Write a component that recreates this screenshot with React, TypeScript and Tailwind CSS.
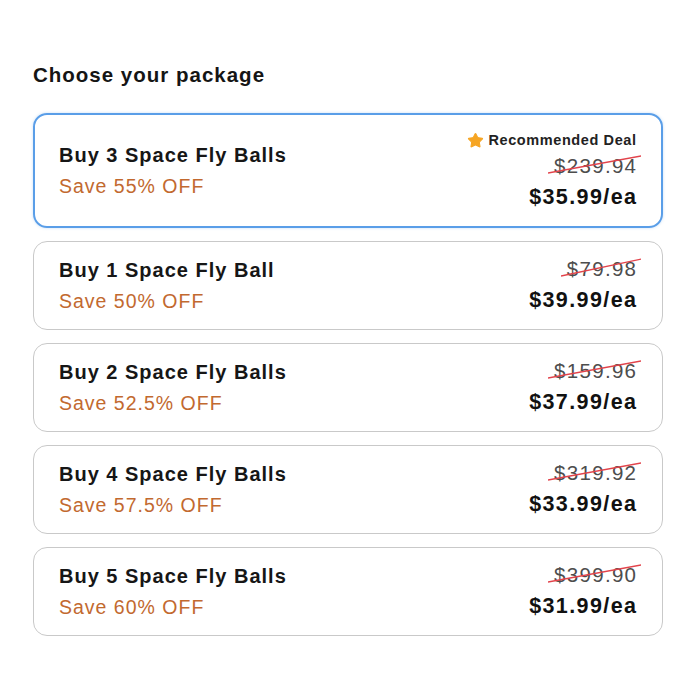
import React from 'react';
import { Star } from 'lucide-react';

const packages = [
  { id: 3, title: 'Buy 3 Space Fly Balls', save: 'Save 55% OFF', was: '$239.94', now: '$35.99/ea', recommended: true },
  { id: 1, title: 'Buy 1 Space Fly Ball', save: 'Save 50% OFF', was: '$79.98', now: '$39.99/ea' },
  { id: 2, title: 'Buy 2 Space Fly Balls', save: 'Save 52.5% OFF', was: '$159.96', now: '$37.99/ea' },
  { id: 4, title: 'Buy 4 Space Fly Balls', save: 'Save 57.5% OFF', was: '$319.92', now: '$33.99/ea' },
  { id: 5, title: 'Buy 5 Space Fly Balls', save: 'Save 60% OFF', was: '$399.90', now: '$31.99/ea' },
];

const OldPrice: React.FC<{ value: string }> = ({ value }) => (
  <span className="relative inline-block text-[20.5px] leading-[26px] text-[#4d4d4d] tracking-[1.3px] -mr-[1.3px]">
    {value}
    {/* hand-drawn style red strike */}
    <svg
      className="absolute -left-[6px] top-0 h-[22px] w-[calc(100%+10px)] pointer-events-none"
      viewBox="0 0 100 22"
      preserveAspectRatio="none"
    >
      <line x1="0" y1="20" x2="100" y2="3" stroke="#e2434b" strokeWidth="1.4" vectorEffect="non-scaling-stroke" />
    </svg>
  </span>
);

export default function App() {
  return (
    <div className="w-[700px] h-[700px] bg-white pl-[33px] pt-[62px] font-['Liberation_Sans',Arial,sans-serif]">
      <h2 className="text-[20.5px] leading-[26px] font-bold text-[#151515] tracking-[1px] mb-[25px]">
        Choose your package
      </h2>

      <div className="w-[630px] flex flex-col gap-[13px]">
        {packages.map((p) => (
          <div
            key={p.id}
            className={
              p.recommended
                ? 'flex items-center justify-between h-[115px] rounded-[14px] border-[2.5px] border-[#5a9ee8] pl-[24px] pr-[25px] shadow-[0_0_3px_rgba(90,158,232,0.35)]'
                : 'flex items-center justify-between h-[89px] rounded-[14px] border border-[#c9c9c9] pl-[25px] pr-[26px]'
            }
          >
            <div className="flex flex-col gap-[3px]">
              <span className="text-[20px] leading-[28px] font-bold text-[#161616] tracking-[1px]">
                {p.title}
              </span>
              <span className="text-[19.5px] leading-[28px] text-[#c2692f] tracking-[1px]">
                {p.save}
              </span>
            </div>

            <div className="flex flex-col items-end">
              {p.recommended && (
                <div className="flex items-center gap-[4px] text-[14.5px] leading-[22px] font-bold text-[#222] mb-[2px] tracking-[0.6px] -mr-[0.6px]">
                  <Star size={17} className="text-[#f6a523]" fill="#f6a523" strokeWidth={1.5} />
                  <span>Recommended Deal</span>
                </div>
              )}
              <OldPrice value={p.was} />
              <span className="text-[21.5px] leading-[30px] font-bold text-[#111] tracking-[1.4px] -mr-[1.4px] mt-[3px]">
                {p.now}
              </span>
            </div>
          </div>
        ))}
      </div>
    </div>
  );
}
